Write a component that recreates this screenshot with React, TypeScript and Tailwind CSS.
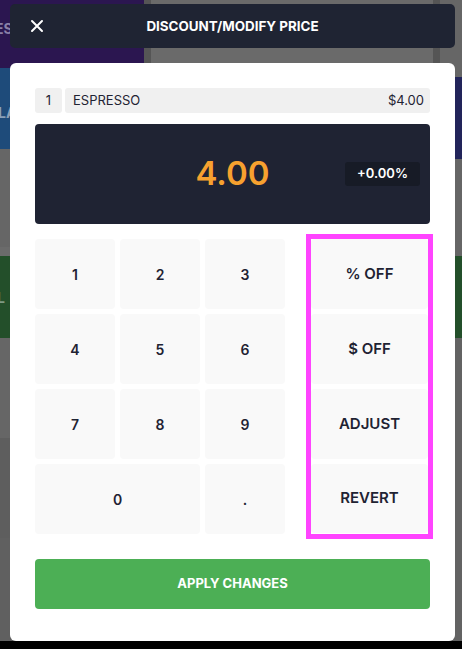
import React from 'react';

const keys = ['1', '2', '3', '4', '5', '6', '7', '8', '9'];
const actions = ['% OFF', '$ OFF', 'ADJUST', 'REVERT'];

function Background() {
  return (
    <div className="flex h-[649px] w-full flex-col bg-black">
      <div className="flex flex-1 gap-[7px] bg-[#555]">
        <div className="flex w-[144px] flex-col bg-[#666]">
          <div className="flex h-[68px] items-start bg-[#2b1650] pt-[18px] text-[14px] font-bold text-[#8a80a8]">
            <span className="-ml-[5px]">ES</span>
          </div>
          <div className="flex h-[81px] items-start bg-[#1e4b7a] pt-[34px] text-[14px] font-bold text-[#8aa0b8]">
            <span className="-ml-[2px]">LA</span>
          </div>
          <div className="h-[98px] bg-[#666]" />
          <div className="h-[9px] bg-[#6b6b6b]" />
          <div className="flex h-[82px] items-center bg-[#234f2a] text-[14px] font-bold text-[#7f9a84]">
            <span className="-ml-[3px]">L</span>
          </div>
          <div className="h-[100px] bg-[#666]" />
          <div className="h-[100px] bg-[#5e5e5e]" />
          <div className="flex-1 bg-[#606060]" />
        </div>
        <div className="flex-1 bg-[#6a6a6a]" />
        <div className="flex w-[22px] flex-col bg-[#666]">
          <div className="h-[77px] bg-[#666]" />
          <div className="h-[82px] bg-[#22245a]" />
          <div className="h-[97px] bg-[#666]" />
          <div className="h-[82px] bg-[#234f2a]" />
          <div className="flex-1 bg-[#636363]" />
        </div>
      </div>
      <div className="h-[8px] bg-black" />
    </div>
  );
}

function XIcon() {
  return (
    <svg width="14" height="14" viewBox="0 0 14 14" fill="none" stroke="white" strokeWidth="2" strokeLinecap="round">
      <path d="M2 2L12 12M12 2L2 12" />
    </svg>
  );
}

export default function App() {
  return (
    <div className="relative h-[649px] w-[462px] overflow-hidden font-['Inter',sans-serif]">
      <Background />
      <div className="absolute inset-0 flex flex-col pt-[4px] pr-[7px] pl-[10px]">
        <div className="grid h-[44px] grid-cols-[1fr_auto_1fr] items-center rounded-[5px] bg-[#1f2433] px-[20px]">
          <div className="flex">
            <XIcon />
          </div>
          <div className="text-[13.4px] font-bold text-white">DISCOUNT/MODIFY PRICE</div>
          <div />
        </div>

        <div className="mt-[15px] flex h-[578px] flex-col rounded-[6px] bg-white px-[25px] pt-[25px] pb-[32px]">
          <div className="flex h-[25px] gap-[3px] text-[13px] text-[#1f2333]">
            <div className="flex w-[27px] items-center justify-center rounded-[3px] bg-[#f0f0f0]">1</div>
            <div className="flex flex-1 items-center justify-between rounded-[3px] bg-[#f0f0f0] pr-[6px] pl-[8px]">
              <span>ESPRESSO</span>
              <span>$4.00</span>
            </div>
          </div>

          <div className="mt-[11px] grid h-[100px] grid-cols-[1fr_auto_1fr] items-center rounded-[4px] bg-[#1f2333]">
            <div />
            <div className="text-[33px] font-semibold text-[#f7a12f]">4.00</div>
            <div className="flex justify-end pr-[10px]">
              <div className="flex h-[24px] w-[75px] items-center justify-center rounded-[3px] bg-[#171b26] text-[13px] font-semibold text-white">
                +0.00%
              </div>
            </div>
          </div>

          <div className="mt-[15px] flex gap-[26px]">
            <div className="grid w-[250px] grid-cols-3 grid-rows-[70px_70px_70px_70px] gap-[5px]">
              {keys.map((k) => (
                <button
                  key={k}
                  className="flex items-center justify-center rounded-[4px] bg-[#f9f9f9] text-[14px] font-semibold text-[#1f2333]"
                >
                  {k}
                </button>
              ))}
              <button className="col-span-2 flex items-center justify-center rounded-[4px] bg-[#f9f9f9] text-[14px] font-semibold text-[#1f2333]">
                0
              </button>
              <button className="flex items-center justify-center rounded-[4px] bg-[#f9f9f9] text-[14px] font-semibold text-[#1f2333]">
                .
              </button>
            </div>
            <div className="grid w-[117px] grid-rows-[70px_70px_70px_69px] gap-[5px] outline-[5px] outline-solid outline-[#ff44ff]">
              {actions.map((a) => (
                <button
                  key={a}
                  className="flex items-center justify-center rounded-[4px] bg-[#f9f9f9] text-[15px] font-semibold text-[#1f2333]"
                >
                  {a}
                </button>
              ))}
            </div>
          </div>

          <button className="mt-[25px] flex h-[50px] items-center justify-center rounded-[4px] bg-[#4caf55] text-[13px] font-bold text-white">
            APPLY CHANGES
          </button>
        </div>
      </div>
    </div>
  );
}
